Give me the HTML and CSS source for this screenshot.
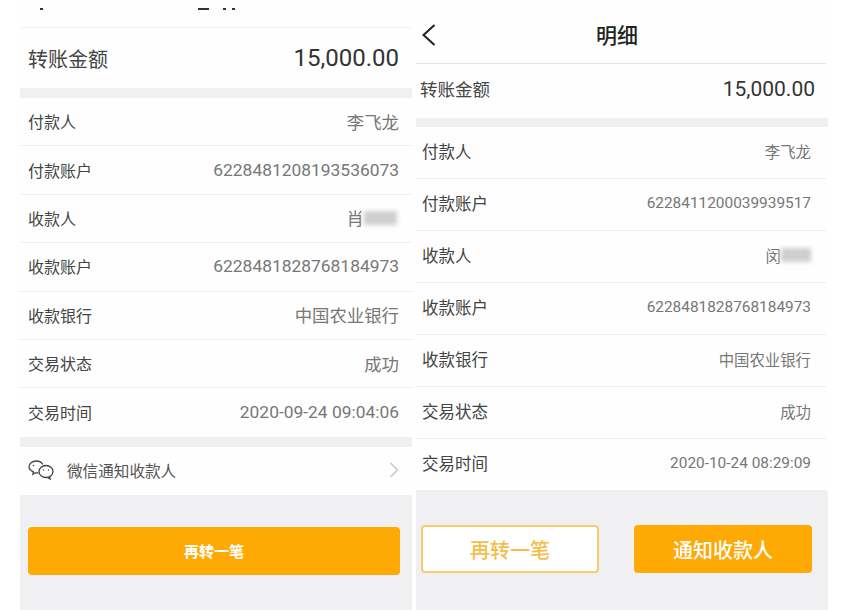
FILE: index.html
```html
<!DOCTYPE html>
<html lang="zh-CN">
<head>
<meta charset="UTF-8">
<meta name="viewport" content="width=device-width, initial-scale=1.0">
<title>转账明细</title>
<link rel="stylesheet" href="styles.css">
</head>
<body>

<div class="page">

  <!-- 左边的截图 -->
  <section class="panel panel-left">
    <div class="cut-top">
      <i class="cut-mark cut-mark-back"></i>
      <i class="cut-mark cut-mark-a"></i>
      <i class="cut-mark cut-mark-b"></i>
      <i class="cut-mark cut-mark-c"></i>
    </div>
    <div class="amount-row">
      <span class="amount-label">转账金额</span>
      <span class="amount-value">15,000.00</span>
    </div>
    <div class="band"></div>
    <div class="row"><span class="row-label">付款人</span><span class="row-value">李飞龙</span></div>
    <div class="row"><span class="row-label">付款账户</span><span class="row-value">6228481208193536073</span></div>
    <div class="row"><span class="row-label">收款人</span><span class="row-value">肖<i class="smudge"></i></span></div>
    <div class="row"><span class="row-label">收款账户</span><span class="row-value">6228481828768184973</span></div>
    <div class="row"><span class="row-label">收款银行</span><span class="row-value">中国农业银行</span></div>
    <div class="row"><span class="row-label">交易状态</span><span class="row-value">成功</span></div>
    <div class="row"><span class="row-label">交易时间</span><span class="row-value">2020-09-24 09:04:06</span></div>
    <div class="band"></div>
    <div class="wechat-row">
      <svg class="wechat-icon" width="26" height="20" viewBox="0 0 26 20" fill="none" stroke="#444" stroke-width="1.300">
        <path d="M10.500 12.800c-1 .2-2 .2-3 0l-2.600 1.500.5-2.500C2.500 10.600 1 8.800 1 6.800 1 3.600 4.200 1 8.200 1c2.900 0 5.500 1.400 6.600 3.500"/>
        <ellipse cx="18" cy="11.500" rx="7" ry="6"/>
        <path d="M21.500 16.500l.6 2.500-2.700-1.500"/>
        <circle cx="5.500" cy="5.500" r=".8" fill="#444" stroke="none"/>
        <circle cx="15.500" cy="10" r=".7" fill="#444" stroke="none"/>
        <circle cx="20.500" cy="10" r=".7" fill="#444" stroke="none"/>
      </svg>
      <span class="wechat-text">微信通知收款人</span>
      <svg class="row-arrow" width="10" height="16" viewBox="0 0 10 16" fill="none" stroke="#c4c4c4" stroke-width="1.300"><path d="M1.500 1l7 7-7 7"/></svg>
    </div>
    <div class="foot foot-left">
      <button class="btn btn-solid btn-wide">再转一笔</button>
    </div>
  </section>

  <!-- 右边的截图 -->
  <section class="panel panel-right">
    <header class="top-bar">
      <svg class="back" width="16" height="24" viewBox="0 0 16 24" fill="none" stroke="#222" stroke-width="2"><path d="M13.500 2L2.500 12l11 10"/></svg>
      <h1 class="top-title">明细</h1>
    </header>
    <div class="amount-row">
      <span class="amount-label">转账金额</span>
      <span class="amount-value">15,000.00</span>
    </div>
    <div class="band"></div>
    <div class="row"><span class="row-label">付款人</span><span class="row-value">李飞龙</span></div>
    <div class="row"><span class="row-label">付款账户</span><span class="row-value">6228411200039939517</span></div>
    <div class="row"><span class="row-label">收款人</span><span class="row-value">闵<i class="smudge"></i></span></div>
    <div class="row"><span class="row-label">收款账户</span><span class="row-value">6228481828768184973</span></div>
    <div class="row"><span class="row-label">收款银行</span><span class="row-value">中国农业银行</span></div>
    <div class="row"><span class="row-label">交易状态</span><span class="row-value">成功</span></div>
    <div class="row"><span class="row-label">交易时间</span><span class="row-value">2020-10-24 08:29:09</span></div>
    <div class="foot foot-right">
      <button class="btn btn-line">再转一笔</button>
      <button class="btn btn-solid">通知收款人</button>
    </div>
  </section>

</div>

</body>
</html>
```

FILE: styles.css
```css
body {
  margin: 0;
  background: #fff;
  font-family: Roboto, "Noto Sans CJK SC", sans-serif;
  overflow: hidden;
}

.page {
  display: flex;
  gap: 4px;
  width: 854px;
  height: 610px;
  padding-left: 20px;
  box-sizing: border-box;
}

.panel {
  display: flex;
  flex-direction: column;
  height: 610px;
  background: #fefefe;
}

.panel-left {
  width: 392px;
}

.panel-right {
  width: 412px;
}

/* 左图顶部被裁掉的标题，只剩几个小点 */
.cut-top {
  position: relative;
  height: 28px;
  box-sizing: border-box;
  border-bottom: 1px solid #f2f2f4;
}

.cut-mark {
  position: absolute;
  top: 8px;
  height: 2px;
  background: #333;
}

.cut-mark-back {
  left: 20px;
  width: 3px;
}

.cut-mark-a {
  left: 178px;
  width: 11px;
}

.cut-mark-b {
  left: 203px;
  width: 3px;
}

.cut-mark-c {
  left: 212px;
  width: 3px;
}

.top-bar {
  position: relative;
  display: flex;
  align-items: center;
  justify-content: center;
  height: 64px;
  margin-right: 2px;
  padding-right: 8px;
  padding-top: 5px;
  box-sizing: border-box;
  border-bottom: 1px solid #e4e4e7;
}

.back {
  position: absolute;
  left: 5px;
  top: 23px;
}

.top-title {
  margin: 0;
  font-size: 21px;
  font-weight: 500;
  color: #222;
}

.amount-row {
  display: flex;
  align-items: center;
  justify-content: space-between;
  height: 60px;
  padding: 0 13px 0 8px;
}

.amount-label {
  font-size: 20px;
  color: #444;
}

.amount-value {
  font-size: 24px;
  color: #333;
}

.band {
  height: 10px;
  background: #f0f0f2;
}

.row {
  display: flex;
  align-items: center;
  justify-content: space-between;
  height: 48.400px;
  padding: 0 13px 1px 8px;
  box-sizing: border-box;
  border-bottom: 1px solid #ededf0;
}

.row:has(+ .band) {
  border-bottom: none;
}

.row-label {
  font-size: 16px;
  color: #444;
}

.row-value {
  display: flex;
  align-items: center;
  font-size: 17.400px;
  color: #777;
}

.smudge {
  display: block;
  width: 33px;
  height: 14px;
  margin-right: 2px;
  background: #cfcfcf;
  filter: blur(2px);
}

.wechat-row {
  display: flex;
  align-items: center;
  height: 48px;
  padding: 0 13px 2px 8px;
  box-sizing: border-box;
}

.wechat-icon {
  margin-right: 13px;
}

.wechat-text {
  flex: 1;
  font-size: 15.600px;
  color: #555;
}

.foot {
  flex: 1;
  background: #f0f0f2;
  display: flex;
}

.foot-left {
  padding: 32px 12px 0 8px;
}

.btn {
  height: 48px;
  box-sizing: border-box;
  border-radius: 4px;
  font-family: inherit;
  font-weight: 500;
  cursor: pointer;
}

.btn-solid {
  width: 178px;
  border: none;
  background: #ffa905;
  color: #fff;
  font-size: 20px;
}

.btn-wide {
  width: 100%;
  font-size: 15px;
  font-weight: 700;
}

.btn-line {
  width: 178px;
  border: 2px solid #f7cc6c;
  background: #fff;
  color: #f5bd4b;
  font-size: 20px;
}

/* 右图的尺寸略有不同 */
.panel-right .amount-row {
  height: 54px;
  padding: 0 13px 5px 4px;
  box-sizing: border-box;
}

.panel-right .amount-label {
  font-size: 17.500px;
}

.panel-right .amount-value {
  font-size: 21px;
}

.panel-right .band {
  height: 9px;
}

.panel-right .row {
  height: 52px;
  margin-right: 2px;
  padding: 0 15px 4px 6px;
}

.panel-right .row:last-of-type {
  border-bottom: none;
}

.panel-right .row-label {
  font-size: 16.500px;
}

.panel-right .row-value {
  font-size: 15.400px;
}

.panel-right .smudge {
  width: 30px;
  margin-right: 0;
}

.foot-right {
  justify-content: space-between;
  padding: 34px 16px 0 5px;
}
```
